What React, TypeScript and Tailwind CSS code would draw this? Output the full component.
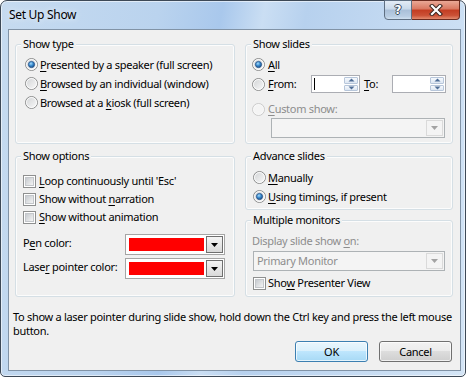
import React from "react";

function Radio({ checked = false, disabled = false }: { checked?: boolean; disabled?: boolean }) {
  return (
    <svg width="13" height="13" viewBox="0 0 13 13" className="block shrink-0">
      <defs>
        <linearGradient id="rbg" x1="0" y1="0" x2="1" y2="1">
          <stop offset="0" stopColor="#cfd1d3" />
          <stop offset="1" stopColor="#fbfbfb" />
        </linearGradient>
        <radialGradient id="rdot" cx="0.4" cy="0.35" r="0.75">
          <stop offset="0" stopColor="#a8dcfb" />
          <stop offset="0.45" stopColor="#3b8dd0" />
          <stop offset="1" stopColor="#143f73" />
        </radialGradient>
      </defs>
      <circle cx="6.5" cy="6.5" r="6" fill={disabled ? "#f4f4f4" : "url(#rbg)"} stroke={disabled ? "#cacaca" : "#8e8f8f"} />
      <circle cx="6.5" cy="6.5" r="5" fill="none" stroke="#ffffff" strokeOpacity={disabled ? 0.4 : 0.85} />
      {checked && <circle cx="6.5" cy="6.5" r="3.1" fill="url(#rdot)" stroke="#24528a" strokeWidth="0.8" />}
    </svg>
  );
}

function Check() {
  return (
    <svg width="13" height="13" viewBox="0 0 13 13" className="block shrink-0">
      <defs>
        <linearGradient id="cbg" x1="0" y1="0" x2="1" y2="1">
          <stop offset="0" stopColor="#c4c8cd" />
          <stop offset="1" stopColor="#f6f6f6" />
        </linearGradient>
      </defs>
      <rect x="0.5" y="0.5" width="12" height="12" fill="#ffffff" stroke="#8e8f8f" />
      <rect x="2.5" y="2.5" width="8" height="8" fill="url(#cbg)" stroke="#c3c6ca" />
    </svg>
  );
}

function SpinArrow({ up }: { up?: boolean }) {
  return (
    <svg width="7" height="4" viewBox="0 0 7 4" className="block">
      <path d={up ? "M0.5 3.5 L3.5 0.5 L6.5 3.5 Z" : "M0.5 0.5 L3.5 3.5 L6.5 0.5 Z"} fill="#4e6d96" />
    </svg>
  );
}

function Spin({ w, cursor }: { w: string; cursor?: boolean }) {
  return (
    <div className={`flex h-[18px] border border-[#abadb3] bg-white ${w}`}>
      <div className="flex-1 pl-[2px] pt-[2px]">{cursor && <div className="h-[12px] w-px bg-black" />}</div>
      <div className="flex w-[15px] flex-col gap-px py-px pr-px">
        <div className="flex flex-1 items-center justify-center rounded-[1px] border border-[#b7c6da] bg-[linear-gradient(to_bottom,#f6f9fd,#dde7f3)]">
          <SpinArrow up />
        </div>
        <div className="flex flex-1 items-center justify-center rounded-[1px] border border-[#b7c6da] bg-[linear-gradient(to_bottom,#f6f9fd,#dde7f3)]">
          <SpinArrow />
        </div>
      </div>
    </div>
  );
}

function DisabledCombo({ w, text }: { w: string; text?: string }) {
  return (
    <div className={`flex h-[20px] items-stretch border border-[#adb2b5] bg-[#f4f4f4] ${w}`}>
      <div className="flex flex-1 items-center whitespace-nowrap pl-[3px] text-[#8d8d8d]">{text}</div>
      <div className="m-px flex w-[17px] items-center justify-center border border-[#dadada] bg-[#f4f4f4]">
        <svg width="7" height="4" viewBox="0 0 7 4" className="block">
          <path d="M0 0 L7 0 L3.5 4 Z" fill="#a3a3a3" />
        </svg>
      </div>
    </div>
  );
}

function ColorCombo() {
  return (
    <div className="flex h-[21px] w-[100px] shrink-0 border border-[#a5a5a5] bg-white p-px">
      <div className="flex-1 p-[2px]">
        <div className="h-full w-full bg-[#ff0000]" />
      </div>
      <div className="flex w-[17px] items-center justify-center border border-[#6f6f6f] bg-[linear-gradient(to_bottom,#f4f4f4,#d9d9d9)]">
        <svg width="7" height="4" viewBox="0 0 7 4" className="block">
          <path d="M0 0 L7 0 L3.5 4 Z" fill="#000000" />
        </svg>
      </div>
    </div>
  );
}

function Group({ title, className, children }: { title: string; className: string; children?: React.ReactNode }) {
  return (
    <div className={`flex flex-col ${className}`}>
      <div className="h-[8px] shrink-0" />
      <div className="flex flex-1 flex-col rounded-[3px] border border-[#d5dfe5] shadow-[inset_0_0_0_1px_rgba(255,255,255,0.8)]">
        <div className="-mt-[9px] ml-[5px] h-[16px] w-fit whitespace-nowrap bg-[#f0f0f0] px-[2px] leading-[16px]">{title}</div>
        {children}
      </div>
    </div>
  );
}

function U({ children }: { children: React.ReactNode }) {
  return <span className="underline decoration-1 underline-offset-[2px]">{children}</span>;
}

export default function App() {
  return (
    <div className="h-[377px] w-[467px] overflow-hidden bg-white font-['Noto_Sans',sans-serif] text-[11px] leading-[16px] tracking-[-0.3px] text-black">
      <div className="flex h-[377px] w-[466px] flex-col rounded-t-[7px] rounded-b-[5px] border border-[#3d4957] bg-[linear-gradient(100deg,#c6dbf0_0%,#bad3ee_30%,#a9c8ec_42%,#cadef3_50%,#b7d1ee_58%,#d4e5f6_100%)] pb-[5px] pl-[7px] pr-[4px] shadow-[inset_0_0_0_1px_rgba(255,255,255,0.55)]">
        {/* title bar */}
        <div className="flex h-[28px] shrink-0 items-start justify-between">
          <div className="whitespace-nowrap pl-px pt-[6px] text-[12px] [text-shadow:0_0_6px_rgba(255,255,255,0.9)]">Set Up Show</div>
          <div className="-mt-px mr-px flex">
            <div className="flex h-[20px] w-[28px] items-center justify-center rounded-bl-[4px] border border-[#5f6f82] bg-[linear-gradient(to_bottom,#e3ecf6_0%,#c9d9ea_45%,#a9bfd8_50%,#b9cde2_85%,#d0e0f0_100%)]">
              <span className="font-['DejaVu_Sans',sans-serif] text-[12px] font-bold leading-[14px] tracking-normal text-white [text-shadow:1px_0_#3a4a5c,-1px_0_#3a4a5c,0_1px_#3a4a5c,0_-1px_#3a4a5c]">?</span>
            </div>
            <div className="flex h-[20px] w-[48px] items-center justify-center rounded-br-[4px] border border-l-0 border-[#6b2a1e] bg-[linear-gradient(to_bottom,#eaa896_0%,#d97760_45%,#c33c22_50%,#cb5136_80%,#e38b6f_100%)]">
              <svg width="14" height="12" viewBox="0 0 14 12" className="block">
                <path d="M3 2 L11 10 M11 2 L3 10" stroke="#3b2620" strokeWidth="4.2" strokeLinecap="square" />
                <path d="M3 2 L11 10 M11 2 L3 10" stroke="#ffffff" strokeWidth="2.2" strokeLinecap="square" />
              </svg>
            </div>
          </div>
        </div>

        {/* client */}
        <div className="flex flex-1 flex-col border border-[#8193a6] bg-[#f0f0f0] pl-[4px] pr-[7px] pt-[6px]">
          <div className="ml-[2px] flex gap-[10px] whitespace-nowrap">
            {/* left column */}
            <div className="flex w-[220px] flex-col gap-[4px]">
              <Group title="Show type" className="h-[108px]">
                <div className="mt-[3px] flex flex-col pl-[9px]">
                  <div className="flex h-[19px] items-center gap-[2px]">
                    <Radio checked />
                    <span><U>P</U>resented by a speaker (full screen)</span>
                  </div>
                  <div className="flex h-[19px] items-center gap-[2px]">
                    <Radio />
                    <span><U>B</U>rowsed by an individual (window)</span>
                  </div>
                  <div className="flex h-[19px] items-center gap-[2px]">
                    <Radio />
                    <span>Browsed at a <U>k</U>iosk (full screen)</span>
                  </div>
                </div>
              </Group>
              <Group title="Show options" className="h-[149px]">
                <div className="mt-[8px] flex flex-col pl-[7px]">
                  <div className="flex h-[18px] items-center gap-[3px]">
                    <Check />
                    <span><U>L</U>oop continuously until 'Esc'</span>
                  </div>
                  <div className="flex h-[18px] items-center gap-[3px]">
                    <Check />
                    <span>Show without <U>n</U>arration</span>
                  </div>
                  <div className="flex h-[18px] items-center gap-[3px]">
                    <Check />
                    <span><U>S</U>how without animation</span>
                  </div>
                  <div className="mt-[8px] flex h-[21px] items-center">
                    <span className="-mt-[4px] w-[102px] shrink-0">P<U>e</U>n color:</span>
                    <ColorCombo />
                  </div>
                  <div className="mt-[3px] flex h-[21px] items-center">
                    <span className="-mt-[4px] w-[102px] shrink-0">Lase<U>r</U> pointer color:</span>
                    <ColorCombo />
                  </div>
                </div>
              </Group>
            </div>

            {/* right column */}
            <div className="flex w-[208px] flex-col">
              <Group title="Show slides" className="h-[108px]">
                <div className="mt-[3px] flex flex-col pl-[6px]">
                  <div className="flex h-[19px] items-center gap-[3px]">
                    <Radio checked />
                    <span><U>A</U>ll</span>
                  </div>
                  <div className="flex h-[20px] items-center">
                    <Radio />
                    <span className="ml-[3px] w-[43px] shrink-0"><U>F</U>rom:</span>
                    <Spin w="w-[49px]" cursor />
                    <span className="ml-[4px] w-[28px] shrink-0"><U>T</U>o:</span>
                    <Spin w="w-[54px]" />
                  </div>
                  <div className="mt-[6px] flex h-[18px] items-center gap-[3px] text-[#8d8d8d]">
                    <Radio disabled />
                    <span><U>C</U>ustom show:</span>
                  </div>
                  <div className="ml-[19px] mt-0">
                    <DisabledCombo w="w-[174px]" />
                  </div>
                </div>
              </Group>
              <Group title="Advance slides" className="mt-[4px] h-[62px]">
                <div className="mt-[4px] flex flex-col pl-[7px]">
                  <div className="flex h-[19px] items-center gap-[2px]">
                    <Radio />
                    <span><U>M</U>anually</span>
                  </div>
                  <div className="flex h-[19px] items-center gap-[2px]">
                    <Radio checked />
                    <span><U>U</U>sing timings, if present</span>
                  </div>
                </div>
              </Group>
              <Group title="Multiple monitors" className="mt-[2px] h-[85px]">
                <div className="mt-[5px] flex flex-col pl-[6px]">
                  <div className="flex h-[16px] items-center text-[#8d8d8d]">
                    <span>Display slide show <U>o</U>n:</span>
                  </div>
                  <div className="ml-px mt-[2px]">
                    <DisabledCombo w="w-[192px]" text="Primary Monitor" />
                  </div>
                  <div className="ml-px mt-[3px] flex h-[18px] items-center gap-[2px]">
                    <Check />
                    <span>Sho<U>w</U> Presenter View</span>
                  </div>
                </div>
              </Group>
            </div>
          </div>

          <p className="mt-[13px] whitespace-nowrap leading-[14px]">
            To show a laser pointer during slide show, hold down the Ctrl key and press the left mouse
            <br />
            button.
          </p>

          <div className="mt-[3px] flex justify-end gap-[11px] pr-px">
            <button className="h-[21px] w-[73px] rounded-[3px] border border-[#3c7fb1] bg-[linear-gradient(to_bottom,#eaf6fd_0%,#d9f0fc_50%,#bee6fd_50%,#a7d9f5_100%)] leading-[16px] shadow-[inset_0_0_0_1px_rgba(255,255,255,0.7)]">
              OK
            </button>
            <button className="h-[21px] w-[73px] rounded-[3px] border border-[#707070] bg-[linear-gradient(to_bottom,#f2f2f2_0%,#ebebeb_50%,#dddddd_50%,#cfcfcf_100%)] leading-[16px] shadow-[inset_0_0_0_1px_rgba(255,255,255,0.7)]">
              Cancel
            </button>
          </div>
        </div>
      </div>
    </div>
  );
}
